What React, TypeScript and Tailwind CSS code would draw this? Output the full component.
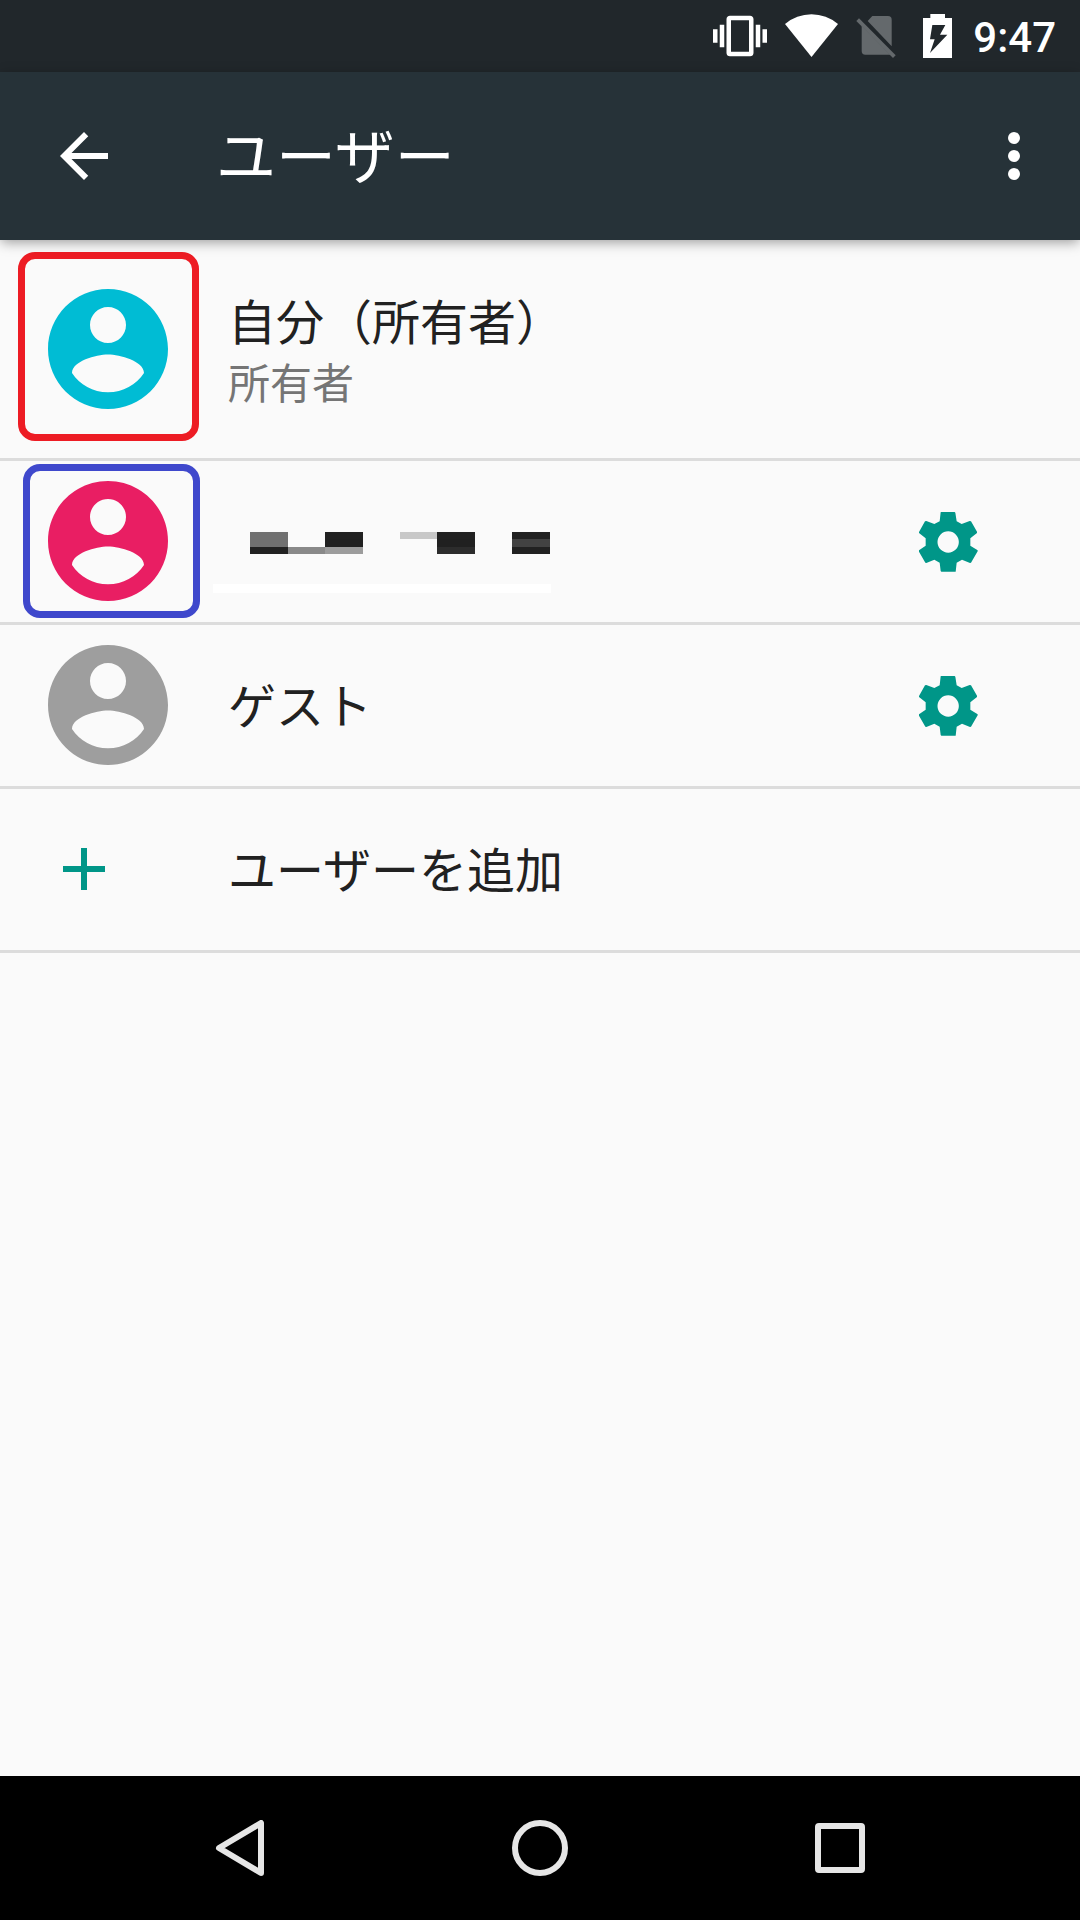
import type { ReactNode } from "react";

const mosaic = [
  ["bg-[#707070]", "", "bg-[#212121]", "", "bg-[#c8c8c8]", "bg-[#212121]", "", "bg-[#212121]"],
  ["bg-[#707070]", "", "bg-[#202020]", "", "", "bg-[#202020]", "", "bg-[#424242]"],
  ["bg-[#212121]", "bg-[#898989]", "bg-[#9c9c9c]", "", "", "bg-[#2c2c2c]", "", "bg-[#212121]"],
];

function StatusBar() {
  return (
    <div className="flex h-[72px] items-center justify-end bg-[#21272b] pr-6 text-white">
      <svg className="size-[54px]" viewBox="0 0 24 24" fill="currentColor">
        <path d="M0 15h2V9H0v6zm3 2h2V7H3v10zm19-8v6h2V9h-2zm-3 8h2V7h-2v10zM16.5 3h-9C6.67 3 6 3.67 6 4.5v15c0 .83.67 1.5 1.5 1.5h9c.83 0 1.5-.67 1.5-1.5v-15c0-.83-.67-1.5-1.5-1.5zM16 19H8V5h8v14z" />
      </svg>
      <svg className="ml-[18px] h-[72px] w-[53px]" viewBox="0 0 53 72" fill="currentColor">
        <path d="M0 24A41 41 0 0 1 53 24L26.5 57z" />
      </svg>
      <svg className="ml-4 h-[72px] w-11 text-[#64696c]" viewBox="462 0 132 216" fill="currentColor">
        <path d="M477 55L587 166L579 174L469 63z" />
        <path d="M503 63L517 48H564Q575 48 575 59V139z" />
        <path d="M485 77V153Q485 164 496 164H571z" />
      </svg>
      <svg className="ml-[25px] h-[72px] w-[29px]" viewBox="669 0 87 216" fill="currentColor">
        <path
          fillRule="evenodd"
          d="M691 42H735V54H756V174H669V54H691zM697 75L690 118H704L690 159L742 104H720L736 75z"
        />
      </svg>
      <span className="mt-[3px] ml-[21px] font-[Roboto] text-[42px] leading-[72px] font-medium">9:47</span>
    </div>
  );
}

function Toolbar() {
  return (
    <header className="relative z-10 flex h-[168px] items-center bg-[#263238] pr-[60px] pl-12 text-white shadow-[0_3px_12px_-1px_rgba(0,0,0,0.4)]">
      <svg className="size-[72px]" viewBox="0 0 24 24" fill="currentColor">
        <path d="M20 11H7.83l5.59-5.59L12 4l-8 8 8 8 1.41-1.41L7.83 13H20v-2z" />
      </svg>
      <h1 className="mb-1.5 ml-24 text-[60px] leading-[80px]">ユーザー</h1>
      <div className="ml-auto flex flex-col gap-1.5">
        <span className="size-3 rounded-full bg-white" />
        <span className="size-3 rounded-full bg-white" />
        <span className="size-3 rounded-full bg-white" />
      </div>
    </header>
  );
}

function Avatar({ className }: { className: string }) {
  return (
    <svg className={`size-[120px] ${className}`} viewBox="2 2 20 20" fill="currentColor">
      <path d="M12 2C6.48 2 2 6.48 2 12s4.48 10 10 10 10-4.48 10-10S17.52 2 12 2zm0 3c1.66 0 3 1.34 3 3s-1.34 3-3 3-3-1.34-3-3 1.34-3 3-3zm0 14.2c-2.5 0-4.71-1.28-6-3.22.03-1.99 4-3.08 6-3.08 1.99 0 5.97 1.09 6 3.08-1.29 1.94-3.5 3.22-6 3.22z" />
    </svg>
  );
}

function Gear() {
  return (
    <svg className="mt-[45px] ml-auto size-[72px] text-[#009688]" viewBox="96 78 216 216" fill="currentColor">
      <path
        fillRule="evenodd"
        d="M183 96H224L226 98L230 124L245 132L269 123L273 124L291 155V159L271 175V197L293 211V214L273 248L270 249L246 239L230 248L227 275H184L182 273L179 248L163 239L139 249L136 248L117 215V211L137 197V175L117 159V156L135 124L139 123L163 132L179 124L182 97zM204.500 154A32 32 0 1 0 204.500 218A32 32 0 1 0 204.500 154z"
      />
    </svg>
  );
}

function Row({ children }: { children: ReactNode }) {
  return (
    <li className="relative flex h-[164px] items-start border-b-[3px] border-[#dcdcdc] pr-24 pl-12 text-[48px] leading-[72px]">
      {children}
    </li>
  );
}

export default function App() {
  return (
    <div className="flex h-[1920px] w-[1080px] flex-col overflow-hidden bg-[#fafafa] font-['Noto_Sans_CJK_JP',sans-serif] text-[#212121]">
      <StatusBar />
      <Toolbar />
      <ul className="flex-1">
        <li className="relative flex h-[221px] items-start border-b-[3px] border-[#dcdcdc] pl-12">
          <Avatar className="mt-[49px] text-[#00bcd4]" />
          <div className="mt-[43px] ml-[60px]">
            <div className="text-[48px] leading-[72px]">自分（所有者）</div>
            <div className="text-[42px] leading-[52px] text-[#757575]">所有者</div>
          </div>
          <span className="absolute top-3 left-[18px] h-[189px] w-[181px] rounded-[17px] border-[7px] border-[#ed1c24]" />
        </li>
        <Row>
          <Avatar className="mt-5 text-[#e91e63]" />
          <div className="mt-[71px] ml-[45px]">
            <div className="ml-[37px] grid grid-cols-[38px_37px_38px_37px_37px_38px_37px_38px] grid-rows-[7px_8px_7px]">
              {mosaic.flat().map((color, index) => (
                <span key={index} className={color} />
              ))}
            </div>
            <div className="mt-[30px] h-[9px] w-[338px] bg-white" />
          </div>
          <Gear />
          <span className="absolute top-[3px] left-[23px] h-[154px] w-[177px] rounded-[17px] border-[7px] border-[#3f48cc]" />
        </Row>
        <Row>
          <Avatar className="mt-5 text-[#9e9e9e]" />
          <span className="mt-[42px] ml-[60px]">ゲスト</span>
          <Gear />
        </Row>
        <Row>
          <svg className="mt-11 size-[72px] text-[#009688]" viewBox="0 0 24 24" fill="currentColor">
            <path d="M19 13h-6v6h-2v-6H5v-2h6V5h2v6h6v2z" />
          </svg>
          <span className="mt-[42px] ml-[108px]">ユーザーを追加</span>
        </Row>
      </ul>
      <nav className="grid h-36 grid-cols-3 place-items-center bg-black px-[90px] text-[#e6e6e6]">
        <svg className="size-14" viewBox="0 0 56 56" fill="none" stroke="currentColor" strokeWidth="6" strokeLinejoin="round">
          <path d="M7 28L49 3V53z" />
        </svg>
        <span className="size-14 rounded-full border-[6px] border-current" />
        <span className="size-[50px] rounded-[4px] border-[6px] border-current" />
      </nav>
    </div>
  );
}
